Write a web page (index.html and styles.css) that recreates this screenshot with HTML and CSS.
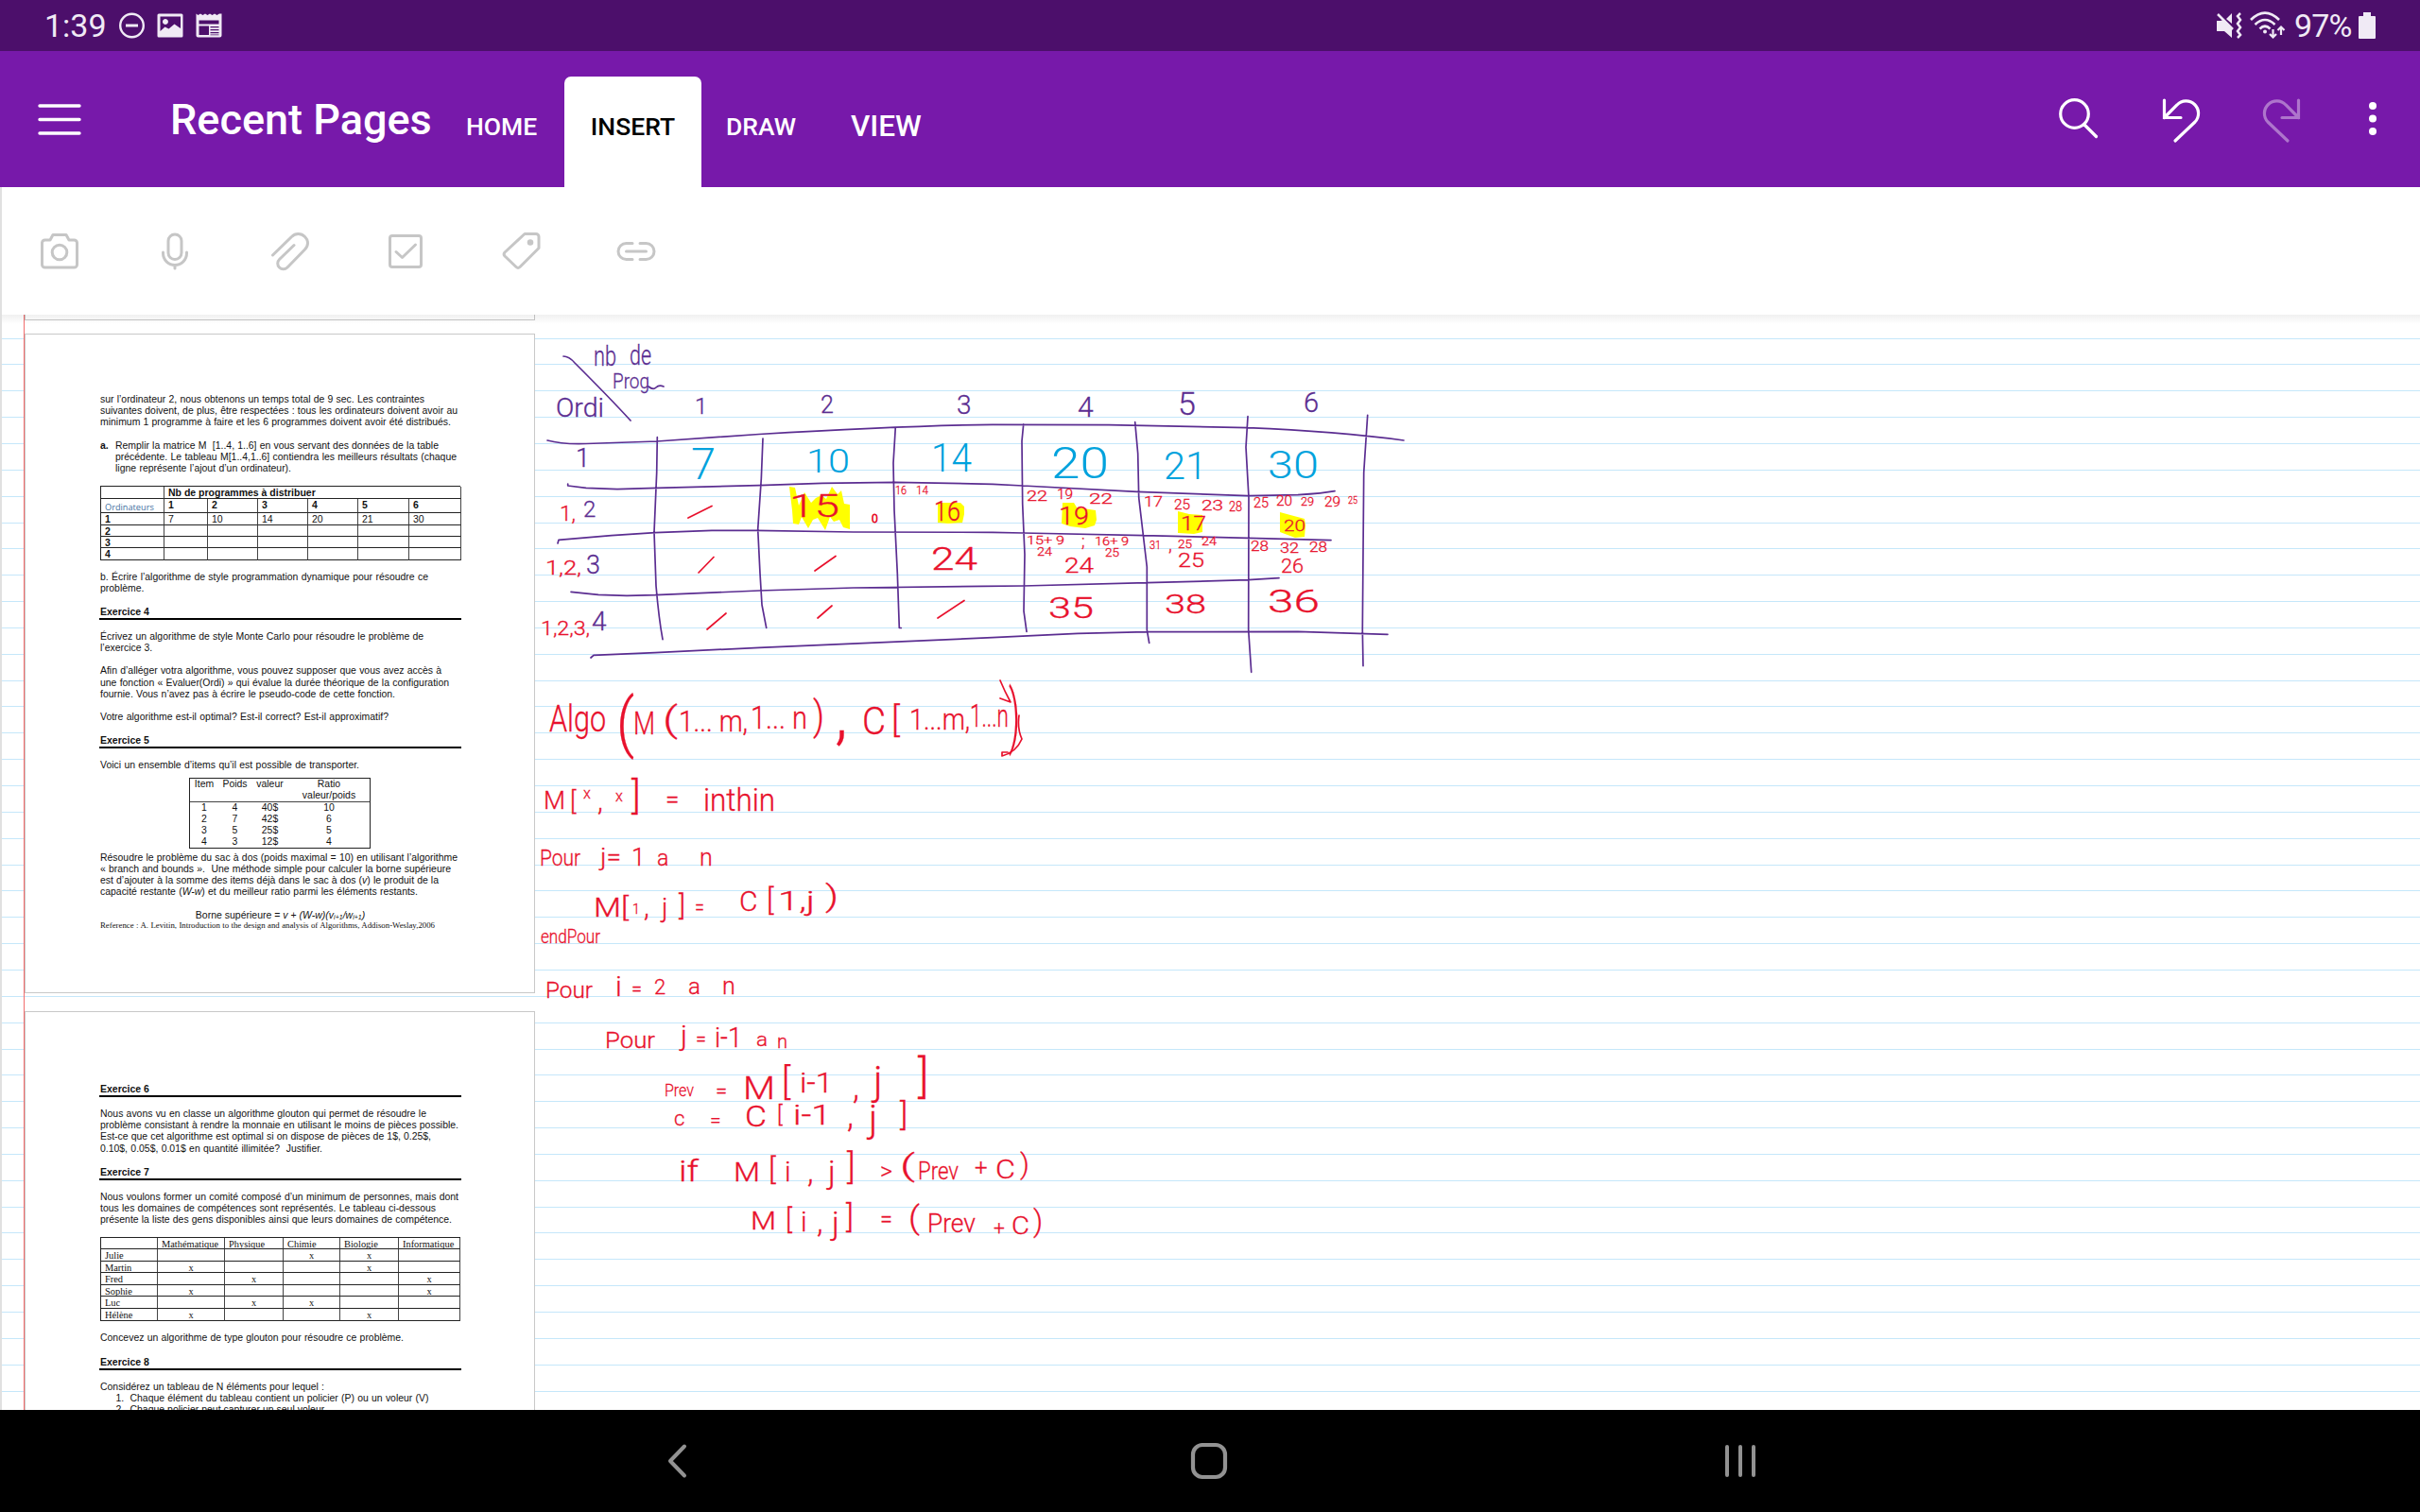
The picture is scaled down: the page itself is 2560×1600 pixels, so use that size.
FILE: index.html
```html
<!DOCTYPE html>
<html lang="fr">
<head>
<meta charset="utf-8">
<title>Recent Pages</title>
<link rel="stylesheet" href="styles.css">
</head>
<body>
<div class="screen">
  <div class="status">
    <div class="status-left">
      <span class="clock">1:39</span>
      <svg class="st-icon" viewBox="0 0 28 28"><circle cx="14.500" cy="14" r="12.300" fill="none" stroke="#f0eaf5" stroke-width="2.400"/><path d="M8 14h13" stroke="#f0eaf5" stroke-width="3"/></svg>
      <svg class="st-icon" viewBox="0 0 28 28"><path fill="#f0eaf5" fill-rule="evenodd" d="M2 1.500h24a1.500 1.500 0 0 1 1.500 1.500v22a1.500 1.500 0 0 1-1.500 1.500H2A1.500 1.500 0 0 1 .5 25V3A1.500 1.500 0 0 1 2 1.500zM3.500 4.500v15.500l5-4.500 4 2 6-5 5 3.500 1.500 1V4.500zM9 7a3 3 0 1 1-.1 0z"/></svg>
      <svg class="st-icon" viewBox="0 0 28 28"><path fill="#f0eaf5" fill-rule="evenodd" d="M.5 1.500l2 1.500 2.500-1.500L7.500 3l2.500-1.500L12.500 3 15 1.500 17.500 3 20 1.500 22.500 3 25 1.500l2.500 0v23a2 2 0 0 1-2 2h-23a2 2 0 0 1-2-2zM3.500 8.500v4h21v-4zM3.500 14.500v9.500h10.500v-9.500zM15.500 15v1.200h9V15zM15.500 18v1.200h9V18zM15.500 21v1.200h9V21zM15.500 23.500v.8h9v-.8z"/></svg>
    </div>
    <div class="status-right">
      <svg width="28" height="30" viewBox="0 0 28 30"><g fill="#f0eaf5"><path d="M1 10h4l3-1 9 9v10l-8-7H1zM11 8l6-6v11z"/></g><path d="M2 3l16 16" stroke="#f0eaf5" stroke-width="2.500"/><path d="M26 2l-3 3 3 4-3 4 3 4-3 4 3 4-3 3" fill="none" stroke="#f0eaf5" stroke-width="2.500"/></svg>
      <svg width="38" height="30" viewBox="0 0 38 30" fill="none" stroke="#f0eaf5" stroke-width="2.600"><path d="M1 9Q16-6 31 9M5.500 14Q16 4 26.500 14M10.500 18.500Q16 13 21.500 18.500"/><circle cx="16" cy="21.500" r="2" fill="#f0eaf5" stroke="none"/><path d="M24.500 19v8M21 24l3.500 3.500 3.500-3.500M33 25v-8M29.500 20l3.500-3.500 3.500 3.500" stroke-width="2.200"/></svg>
      <span class="pct">97%</span>
      <svg width="18" height="28" viewBox="0 0 18 28"><path fill="#f0eaf5" d="M5 0h8v4h4a1 1 0 0 1 1 1v22a1 1 0 0 1-1 1H1a1 1 0 0 1-1-1V5a1 1 0 0 1 1-1h4z"/></svg>
    </div>
  </div>

  <div class="header">
    <svg class="burger" width="46" height="32" viewBox="0 0 46 32" stroke="#fff" stroke-width="3.400" stroke-linecap="round"><path d="M2 1h42M2 15.500h42M2 30h42"/></svg>
    <div class="title">Recent Pages</div>
    <div class="tab home">HOME</div>
    <div class="tab insert">INSERT</div>
    <div class="tab draw">DRAW</div>
    <div class="tab view">VIEW</div>
    <div class="actions">
      <svg width="44" height="46" viewBox="0 0 44 46" fill="none" stroke="#fff" stroke-width="3.200" stroke-linecap="round"><circle cx="18.500" cy="18.500" r="14.800"/><path d="M29 30l12.500 12.500"/></svg>
      <svg width="44" height="50" viewBox="0 0 44 50" fill="none" stroke="#fff" stroke-width="3.200" stroke-linecap="round"><path d="M3.500 4v18.500h17.500M3.500 22.500L17 9a13 13 0 0 1 19 18L15 47"/></svg>
      <svg class="redo" width="44" height="50" viewBox="0 0 44 50" fill="none" stroke="#ae75cc" stroke-width="3.200" stroke-linecap="round"><path d="M40.500 4v18.500H23M40.500 22.500L27 9A13 13 0 0 0 8 27l21 20"/></svg>
      <svg width="10" height="38" viewBox="0 0 10 38" fill="#fff"><circle cx="5" cy="5" r="4"/><circle cx="5" cy="18.500" r="4"/><circle cx="5" cy="32" r="4"/></svg>
    </div>
  </div>

  <div class="toolbar">
    <svg class="tool" viewBox="0 0 44 44"><path d="M6.500 10H12l3-5.500h14L32 10h5.500a3 3 0 0 1 3 3v23a3 3 0 0 1-3 3h-31a3 3 0 0 1-3-3V13a3 3 0 0 1 3-3z"/><circle cx="22" cy="23" r="7.800"/></svg>
    <svg class="tool" viewBox="0 0 44 44"><rect x="15" y="4" width="14" height="26.500" rx="7"/><path d="M9.500 23v1a12.500 12.500 0 0 0 25 0V23M22 37v3"/></svg>
    <svg class="tool" viewBox="0 0 44 44"><path d="M3.500 26L23.500 6.500a9.700 9.700 0 0 1 14 0c4 4 4 9.500 0 13.500L19 39a6 6 0 0 1-8.500-8.500L26 15.500"/></svg>
    <svg class="tool" viewBox="0 0 44 44"><rect x="5.500" y="5.500" width="33" height="33" rx="2.500"/><path d="M12 22.500l6.500 6 14-13.500"/></svg>
    <svg class="tool" viewBox="0 0 44 44"><path d="M26 3.500h12a3 3 0 0 1 3 3v12L21 38.500a3 3 0 0 1-4 0L5 27a3 3 0 0 1 0-4z"/><circle cx="32" cy="12.500" r="1.800" fill="#c6c6c6"/></svg>
    <svg class="tool" viewBox="0 0 44 44"><path d="M18 13.500h-6.500a8.500 8.500 0 0 0 0 17H18M26 13.500h6.500a8.500 8.500 0 0 1 0 17H26M11.500 22h21"/></svg>
  </div>

  <div class="canvas">
    <svg class="rules" viewBox="0 333 2560 1160" width="2560" height="1160" shape-rendering="crispEdges">
      <path fill="none" stroke="#c5e7fa" d="M2 358.5H2560M2 385.5H2560M2 413.5H2560M2 441.5H2560M2 469.5H2560M2 497.5H2560M2 525.5H2560M2 553.5H2560M2 580.5H2560M2 608.5H2560M2 636.5H2560M2 664.5H2560M2 692.5H2560M2 720.5H2560M2 747.5H2560M2 775.5H2560M2 803.5H2560M2 831.5H2560M2 859.5H2560M2 887.5H2560M2 915.5H2560M2 942.5H2560M2 970.5H2560M2 998.5H2560M2 1026.5H2560M2 1054.5H2560M2 1082.5H2560M2 1110.5H2560M2 1137.5H2560M2 1165.5H2560M2 1193.5H2560M2 1221.5H2560M2 1249.5H2560M2 1277.5H2560M2 1304.5H2560M2 1332.5H2560M2 1360.5H2560M2 1388.5H2560M2 1416.5H2560M2 1444.5H2560M2 1472.5H2560"/>
    </svg>

    <div class="printouts">
      <div class="sheet sheet-prev"></div>
      <div class="sheet sheet-one">
        <p><span class="ln" style="width:343px">sur l’ordinateur 2, nous obtenons un temps total de 9 sec. Les contraintes</span><span class="ln" style="width:378px">suivantes doivent, de plus, être respectées : tous les ordinateurs doivent avoir au</span><span class="ln" style="width:371px">minimum 1 programme à faire et les 6 programmes doivent avoir été distribués.</span></p>
        <div class="item"><b>a.</b><p><span class="ln" style="width:342px">Remplir la matrice M &nbsp;[1..4, 1..6] en vous servant des données de la table</span><span class="ln" style="width:361px">précédente. Le tableau M[1..4,1..6] contiendra les meilleurs résultats (chaque</span><span class="ln" style="width:186px">ligne représente l’ajout d’un ordinateur).</span></p></div>
        <div class="grid4">
          <span></span><b class="span6">Nb de programmes à distribuer</b>
          <span class="ordi">Ordinateurs</span><b>1</b><b>2</b><b>3</b><b>4</b><b>5</b><b>6</b>
          <b>1</b><span>7</span><span>10</span><span>14</span><span>20</span><span>21</span><span>30</span>
          <b>2</b><span></span><span></span><span></span><span></span><span></span><span></span>
          <b>3</b><span></span><span></span><span></span><span></span><span></span><span></span>
          <b>4</b><span></span><span></span><span></span><span></span><span></span><span></span>
        </div>
        <p><span class="ln" style="width:347px">b. Écrire l’algorithme de style programmation dynamique pour résoudre ce</span><span class="ln" style="width:46px">problème.</span></p>
        <h2>Exercice 4</h2>
        <p><span class="ln" style="width:342px">Écrivez un algorithme de style Monte Carlo pour résoudre le problème de</span><span class="ln" style="width:55px">l’exercice 3.</span></p>
        <p><span class="ln" style="width:361px">Afin d’alléger votra algorithme, vous pouvez supposer que vous avez accès à</span><span class="ln" style="width:369px">une fonction « Evaluer(Ordi) » qui évalue la durée théorique de la configuration</span><span class="ln" style="width:312px">fournie. Vous n’avez pas à écrire le pseudo-code de cette fonction.</span></p>
        <p><span class="ln" style="width:305px">Votre algorithme est-il optimal? Est-il correct? Est-il approximatif?</span></p>
        <h2>Exercice 5</h2>
        <p><span class="ln" style="width:274px">Voici un ensemble d’items qu’il est possible de transporter.</span></p>
        <div class="sack">
          <div class="sack-row head"><span>Item</span><span>Poids</span><span>valeur</span><span>Ratio<br>valeur/poids</span></div>
          <div class="sack-row"><span>1</span><span>4</span><span>40$</span><span>10</span></div>
          <div class="sack-row"><span>2</span><span>7</span><span>42$</span><span>6</span></div>
          <div class="sack-row"><span>3</span><span>5</span><span>25$</span><span>5</span></div>
          <div class="sack-row"><span>4</span><span>3</span><span>12$</span><span>4</span></div>
        </div>
        <p class="tight"><span class="ln" style="width:378px">Résoudre le problème du sac à dos (poids maximal = 10) en utilisant l’algorithme</span><span class="ln" style="width:371px">« branch and bounds ». &nbsp;Une méthode simple pour calculer la borne supérieure</span><span class="ln" style="width:358px">est d’ajouter à la somme des items déjà dans le sac à dos (<i>v</i>) le produit de la</span><span class="ln" style="width:336px">capacité restante (<i>W-w</i>) et du meilleur ratio parmi les éléments restants.</span></p>
        <p class="formula">Borne supérieure = <i>v</i> + <i>(W-w)(v<small>i+1</small>/w<small>i+1</small>)</i></p>
        <p class="cite"><span class="ln" style="width:354px">Reference : A. Levitin, Introduction to the design and analysis of Algorithms, Addison-Weslay,2006</span></p>
      </div>
      <div class="sheet sheet-two">
        <h2>Exercice 6</h2>
        <p><span class="ln" style="width:345px">Nous avons vu en classe un algorithme glouton qui permet de résoudre le</span><span class="ln" style="width:379px">problème consistant à rendre la monnaie en utilisant le moins de pièces possible.</span><span class="ln" style="width:350px">Est-ce que cet algorithme est optimal si on dispose de pièces de 1$, 0.25$,</span><span class="ln" style="width:235px">0.10$, 0.05$, 0.01$ en quantité illimitée? &nbsp;Justifier.</span></p>
        <h2>Exercice 7</h2>
        <p><span class="ln" style="width:379px">Nous voulons former un comité composé d’un minimum de personnes, mais dont</span><span class="ln" style="width:355px">tous les domaines de compétences sont représentés. Le tableau ci-dessous</span><span class="ln" style="width:372px">présente la liste des gens disponibles ainsi que leurs domaines de compétence.</span></p>
        <div class="people">
          <span></span><span class="l">Mathématique</span><span class="l">Physique</span><span class="l">Chimie</span><span class="l">Biologie</span><span class="l">Informatique</span>
          <span class="l">Julie</span><span></span><span></span><span>x</span><span>x</span><span></span>
          <span class="l">Martin</span><span>x</span><span></span><span></span><span>x</span><span></span>
          <span class="l">Fred</span><span></span><span>x</span><span></span><span></span><span>x</span>
          <span class="l">Sophie</span><span>x</span><span></span><span></span><span></span><span>x</span>
          <span class="l">Luc</span><span></span><span>x</span><span>x</span><span></span><span></span>
          <span class="l">Hélène</span><span>x</span><span></span><span></span><span>x</span><span></span>
        </div>
        <p><span class="ln" style="width:321px">Concevez un algorithme de type glouton pour résoudre ce problème.</span></p>
        <h2>Exercice 8</h2>
        <p><span class="ln" style="width:237px">Considérez un tableau de N éléments pour lequel :</span></p>
        <div class="item list"><span>1.</span><span class="ln" style="width:316px">Chaque élément du tableau contient un policier (P) ou un voleur (V)</span></div>
        <div class="item list"><span>2.</span><span class="ln" style="width:208px">Chaque policier peut capturer un seul voleur.</span></div>
      </div>
    </div>

    <svg class="ink" viewBox="0 333 2560 1160" width="2560" height="1160">
      <path class="hl" d="M835 515l6 1 4 19 6-14 7 11 5-5 6-3 5 4 6-13 6 8 4-4 3 14 6 1v26l-7-2-4-8-6 2-4-5-5 14-8-13-5 2-5 9-7-12-3 8-6-1-1-14z"/>
      <path class="hl" d="M992 532h24l4 4v8l-2 9-15 1-11-1z"/>
      <path class="hl" d="M1124 532h12l3 5 20 3 1 10-2 6-10 3-16-2-9-3z"/>
      <path class="hl" d="M1246 541l12 3 14 1v18l-9 2-17-1z"/>
      <path class="hl" d="M1354 542l11 3 15 4 1 7-1 12-10 1-16-6z"/>
      <path class="violet" d="M596 377q6 0 12 7Q645 421 667 445M686 409q5 4 8 1t8-1M579 466C590 469 605 470 620 469.500L695 467 803 459.500C880 455 960 450.500 1050 449.300L1173 449.700 1320 452.700C1400 456 1440 460 1485 466M600.700 512v2L620 516.300 653 517.600 695 516.300 803 513.700 870 511.300 947 510.300 1050 512.300 1082 514 1203 520.300 1320 524.700 1373 523.700Q1400 522 1412 519.700M590 575L591 571.300 647 566.700 693 563.700 753 561.300 800 561.300 903 563 1050 563.300 1082 564 1210 566.700 1320 569.300 1408 571.700M604 626.300L633 629.300 663 630.300 693 629.700 803 625 903 622 1040 620.300 1082 620 1213 616.700 1320 613.700 1353 611.700M625 696L628 693.300 693 690.700 803 685.300 1050 674.700 1140 670.300 1213 668.700 1373 668.300 1468 671.300M695.300 462.700L694.700 500 692 563 694 620Q697 655 701 676.700M807 464L805.300 506.700 801.700 560 804 606.700 806 640 810.700 664.300M947.300 452L945 490 946 540 949.300 606.700 951.300 664.500h2M1082.700 449L1081 466.700 1081.700 533.300 1084 586.700 1083 646.700 1086 668.300M1200.700 446.700L1203.700 480 1204.700 526.700 1213.300 600 1213.300 666.700 1215.700 680.300M1320 440.700L1318 473.300 1321 526.700 1320.700 666.700 1323.700 711.300M1446.700 439.300L1442.700 500 1441.300 666.700 1442 704.700"/>
      <path class="red" d="M728 548L753 535.500M739 606L755 589.500M862 604L884 588.500M748 666L768 649M865 654L880 641M992 654L1020 635.500"/>

      <g class="t violet-t">
        <text x="628" y="387" font-size="29" textLength="24">nb</text><text x="666" y="386" font-size="30" textLength="23">de</text><text x="648" y="411" font-size="22" textLength="39">Prog</text><text x="588" y="441" font-size="27" textLength="51">Ordi</text>
        <text x="735" y="438" font-size="24">1</text><text x="868" y="437" font-size="25">2</text><text x="1012" y="438" font-size="28">3</text><text x="1140" y="441" font-size="30">4</text><text x="1246" y="439" font-size="34">5</text><text x="1379" y="436" font-size="29">6</text>
        <text x="609" y="494" font-size="27">1</text><text x="617" y="547" font-size="24">2</text><text x="620" y="607" font-size="27">3</text><text x="626" y="667" font-size="28">4</text>
      </g>
      <g class="t blue-t">
        <text x="731" y="507" font-size="47">7</text><text x="853" y="500" font-size="35" textLength="46">10</text><text x="985" y="499" font-size="42" textLength="43">14</text><text x="1112" y="506" font-size="46" textLength="61">20</text><text x="1231" y="507" font-size="40" textLength="46">21</text><text x="1341" y="506" font-size="41" textLength="54">30</text>
      </g>
      <g class="t red-t">
        <text x="592" y="551" font-size="22" textLength="17">1,</text><text x="835" y="547" font-size="34" textLength="53">15</text><text x="922" y="553" font-size="12" stroke-width=".8">0</text><text x="947" y="523" font-size="13" textLength="12">16</text><text x="969" y="523" font-size="13" textLength="13">14</text><text x="988" y="551" font-size="29" textLength="28">16</text>
        <text x="1086" y="530" font-size="14" textLength="22">22</text><text x="1118" y="528" font-size="14" textLength="17">19</text><text x="1152" y="533" font-size="15" textLength="25">22</text><text x="1120" y="555" font-size="25" textLength="32">19</text>
        <text x="1210" y="536" font-size="15" textLength="20">17</text><text x="1242" y="539" font-size="15" textLength="17">25</text><text x="1271" y="540" font-size="15" textLength="23">23</text><text x="1300" y="541" font-size="15" textLength="14">28</text><text x="1249" y="561" font-size="21" textLength="27">17</text>
        <text x="1326" y="537" font-size="14" textLength="16">25</text><text x="1350" y="535" font-size="14" textLength="17">20</text><text x="1376" y="535" font-size="13" textLength="14">29</text><text x="1401" y="536" font-size="14" textLength="17">29</text><text x="1426" y="533" font-size="11" textLength="10">25</text><text x="1358" y="562" font-size="17" textLength="23">20</text>
        <text x="577" y="608" font-size="20" textLength="38">1,2,</text><text x="985" y="603" font-size="34" textLength="49">24</text>
        <text x="1086" y="576" font-size="12" textLength="40">15+ 9</text><text x="1144" y="579" font-size="18">;</text><text x="1158" y="577" font-size="12" textLength="36">16+ 9</text><text x="1097" y="588" font-size="13" textLength="16">24</text><text x="1169" y="589" font-size="12" textLength="15">25</text><text x="1126" y="606" font-size="22" textLength="31">24</text>
        <text x="1216" y="581" font-size="13" textLength="12">31</text><text x="1236" y="583" font-size="20">,</text><text x="1246" y="580" font-size="12" textLength="15">25</text><text x="1271" y="577" font-size="12" textLength="16">24</text><text x="1246" y="600" font-size="21" textLength="28">25</text>
        <text x="1323" y="583" font-size="15" textLength="19">28</text><text x="1354" y="585" font-size="14" textLength="20">32</text><text x="1385" y="584" font-size="14" textLength="19">28</text><text x="1355" y="606" font-size="21" textLength="24">26</text>
        <text x="572" y="672" font-size="20" textLength="52">1,2,3,</text><text x="1109" y="654" font-size="31" textLength="48">35</text><text x="1232" y="649" font-size="27" textLength="44">38</text><text x="1341" y="648" font-size="34" textLength="55">36</text>

        <text x="581" y="774" font-size="38" textLength="60">Algo</text><text x="652" y="788" font-size="68" textLength="19">(</text><text x="670" y="777" font-size="33" textLength="23">M</text><text x="701" y="774" font-size="36" textLength="16">(</text><text x="718" y="774" font-size="31" textLength="73">1... m,</text><text x="794" y="771" font-size="33" textLength="60">1... n</text><text x="860" y="772" font-size="42" textLength="12">)</text><text x="883" y="780" font-size="72">,</text>
        <text x="912" y="777" font-size="40" textLength="25">C</text><text x="943" y="774" font-size="37">[</text><text x="962" y="772" font-size="31" textLength="64">1...m,</text><text x="1026" y="769" font-size="34" textLength="41">1...n</text><text x="1067" y="783" font-size="74" textLength="12">)</text>
        <text x="575" y="856" font-size="26" textLength="23">M</text><text x="603" y="857" font-size="27">[</text><text x="617" y="845" font-size="16">x</text><text x="632" y="858" font-size="30">,</text><text x="651" y="848" font-size="16">x</text><text x="668" y="856" font-size="40">]</text><text x="704" y="855" font-size="26">=</text><text x="744" y="858" font-size="33" textLength="76">inthin</text>
        <text x="571" y="916" font-size="23" textLength="43">Pour</text><text x="635" y="916" font-size="26" textLength="22">j=</text><text x="668" y="916" font-size="26">1</text><text x="695" y="916" font-size="23">a</text><text x="740" y="916" font-size="25">n</text>
        <text x="628" y="970" font-size="28" textLength="37">M[</text><text x="669" y="967" font-size="14">1</text><text x="681" y="970" font-size="30">,</text><text x="700" y="970" font-size="28">j</text><text x="718" y="968" font-size="29">]</text><text x="735" y="968" font-size="24" textLength="10">=</text><text x="782" y="964" font-size="30">C</text><text x="811" y="963" font-size="31">[</text><text x="823" y="963" font-size="28" textLength="39">1,j</text><text x="873" y="959" font-size="32" textLength="14">)</text>
        <text x="572" y="998" font-size="20" textLength="63">endPour</text>
        <text x="577" y="1056" font-size="23" textLength="50">Pour</text><text x="651" y="1054" font-size="30">i</text><text x="668" y="1054" font-size="22" textLength="11">=</text><text x="692" y="1052" font-size="22">2</text><text x="728" y="1052" font-size="24">a</text><text x="764" y="1052" font-size="25">n</text>
        <text x="640" y="1109" font-size="23" textLength="53">Pour</text><text x="720" y="1106" font-size="30">j</text><text x="736" y="1107" font-size="22" textLength="11">=</text><text x="756" y="1108" font-size="29" textLength="29">i-1</text><text x="800" y="1107" font-size="20" textLength="12">a</text><text x="822" y="1109" font-size="20">n</text>
        <text x="703" y="1160" font-size="19" textLength="31">Prev</text><text x="757" y="1162" font-size="22">=</text><text x="786" y="1163" font-size="34" textLength="34">M</text><text x="827" y="1158" font-size="38">[</text><text x="846" y="1156" font-size="30" textLength="35">i-1</text><text x="902" y="1162" font-size="36">,</text><text x="924" y="1158" font-size="42">j</text><text x="971" y="1156" font-size="48">]</text>
        <text x="713" y="1191" font-size="22">c</text><text x="751" y="1192" font-size="21">=</text><text x="788" y="1192" font-size="31" textLength="23">C</text><text x="822" y="1188" font-size="24">[</text><text x="839" y="1190" font-size="30" textLength="40">i-1</text><text x="896" y="1192" font-size="36">,</text><text x="919" y="1198" font-size="40">j</text><text x="952" y="1191" font-size="34">]</text>
        <text x="718" y="1250" font-size="31" textLength="21">if</text><text x="776" y="1250" font-size="27" textLength="28">M</text><text x="813" y="1248" font-size="32">[</text><text x="830" y="1250" font-size="29">i</text><text x="854" y="1251" font-size="34">,</text><text x="876" y="1252" font-size="34">j</text><text x="896" y="1247" font-size="36">]</text><text x="931" y="1248" font-size="26" textLength="13">&gt;</text><text x="952" y="1244" font-size="32" textLength="16">(</text><text x="971" y="1248" font-size="26" textLength="43">Prev</text><text x="1031" y="1244" font-size="24">+</text><text x="1053" y="1247" font-size="27" textLength="21">C</text><text x="1079" y="1242" font-size="30">)</text>
        <text x="794" y="1301" font-size="25" textLength="27">M</text><text x="831" y="1300" font-size="29">[</text><text x="847" y="1303" font-size="29">i</text><text x="864" y="1304" font-size="34">,</text><text x="880" y="1306" font-size="34">j</text><text x="895" y="1299" font-size="33">]</text><text x="931" y="1299" font-size="26" textLength="13">=</text><text x="961" y="1300" font-size="33" textLength="12">(</text><text x="981" y="1304" font-size="27" textLength="51">Prev</text><text x="1051" y="1306" font-size="21">+</text><text x="1070" y="1306" font-size="25" textLength="19">C</text><text x="1093" y="1303" font-size="31">)</text>
      </g>
      <path class="red" d="M1058 720q5 12 11 23l-11-4M1078 757q-2 14 3 25-6 14-21 18v-4h6"/>
    </svg>
    <div class="margin-line"></div>
    <div class="shade"></div>
  </div>

  <div class="nav">
    <svg width="22" height="38" viewBox="0 0 22 38" fill="none" stroke="#929292" stroke-width="4" stroke-linecap="round" stroke-linejoin="round"><path d="M19 3.500L4 19l15 15.500"/></svg>
    <svg width="40" height="40" viewBox="0 0 40 40"><rect x="3" y="3" width="34" height="34" rx="10" fill="none" stroke="#929292" stroke-width="4.200"/></svg>
    <svg width="34" height="38" viewBox="0 0 34 38" stroke="#929292" stroke-width="4" stroke-linecap="round"><path d="M3 4v30M17 4v30M31 4v30"/></svg>
  </div>
</div>
<script src="ink.js"></script>
</body>
</html>
```
FILE: ink.js
```js
// Stretch the glyphs, not only the gaps, to each word's measured length.
document.querySelectorAll('.ink text[textLength]').forEach(function (t) {
  t.setAttribute('lengthAdjust', 'spacingAndGlyphs');
});
```
FILE: styles.css
```css
* { box-sizing: border-box; }
body { margin: 0; background: #000; font-family: Roboto, sans-serif; }
.screen { width: 2560px; height: 1600px; display: flex; flex-direction: column; overflow: hidden; }

.status { height: 54px; background: #4c0f6b; color: #f0eaf5; display: flex; justify-content: space-between; padding: 0 47px 0 47px; font-size: 34px; line-height: 56px; }
.status-left, .status-right { display: flex; align-items: center; }
.status-left { gap: 13px; }
.st-icon { width: 28px; height: 28px; }
.clock { width: 65px; }
.status-right { gap: 9px; }
.status-right svg:first-child { margin-right: -1px; }
.pct { width: 64px; letter-spacing: -.8px; }
.status-right svg:last-child { margin-left: -5px; }

.header { height: 144px; background: #7719aa; color: #fff; display: flex; font-weight: 500; }
.burger { margin: 57px 0 0 40px; overflow: visible; }
.title { width: 276px; margin-left: 94px; font-size: 45px; line-height: 53px; padding-top: 46px; white-space: nowrap; }
.tab { font-size: 26.5px; line-height: 32px; padding-top: 64px; white-space: nowrap; }
.home { width: 104px; margin-left: 37px; }
.insert { width: 145px; height: 117px; margin-top: 27px; padding-top: 37px; text-align: center; background: #fff; color: #000; border-radius: 7px 7px 0 0; }
.draw { margin-left: 26px; width: 132px; }
.view { font-size: 31.5px; }
.actions { flex: 1; display: flex; justify-content: flex-end; padding: 48px 45px 0 0; }
.actions svg:nth-child(1) { margin-right: 66px; }
.actions svg:nth-child(2) { margin-right: 61px; }
.actions svg:nth-child(3) { margin-right: 70px; }
.actions svg:nth-child(4) { margin-top: 5px; }

.toolbar { height: 135px; background: #fff; border-left: 2px solid #e0e0e0; display: flex; align-items: center; gap: 78px; padding-left: 39px; }
.tool { width: 44px; height: 44px; fill: none; stroke: #c6c6c6; stroke-width: 3; stroke-linecap: round; stroke-linejoin: round; }

.canvas { height: 1159px; background: #fff; position: relative; overflow: hidden; border-left: 2px solid #e0e0e0; }
.rules, .ink { position: absolute; left: -2px; top: 0; }
.margin-line { position: absolute; left: 23px; top: 0; width: 1px; height: 100%; background: #f26d6d; }
.shade { position: absolute; left: 0; top: 0; width: 100%; height: 10px; background: linear-gradient(rgba(0,0,0,.06), rgba(0,0,0,0)); }

.printouts { position: relative; width: 540px; margin-left: 24px; font: 10.45px/12.2px "Liberation Sans", sans-serif; color: #111; }
.sheet { background: #fff; border: 1px solid #c8c8c8; padding-left: 79px; }
.sheet-prev { height: 6px; border-top: 0; }
.sheet-one { height: 698px; margin-top: 14px; padding-top: 63px; }
.sheet-two { height: 600px; margin-top: 19px; padding-top: 75px; }
.sheet p { margin: 12px 0 0; }
.sheet > p:first-child { margin-top: 0; }
.ln { display: block; white-space: nowrap; text-align: justify; text-align-last: justify; }
.item { display: flex; margin-top: 12.4px; }
.item b { width: 16px; }
.item p { margin: 0; }
.list { margin: 0 0 0 16.5px; }
.list > span:first-child { width: 15px; }
.sheet h2 { width: 383px; margin: 12px 0 0 -1px; padding: 0 1px; height: 15px; font-size: 10.5px; line-height: 12px; font-weight: bold; border-bottom: 2.5px solid #000; }
.sheet > h2:first-child { margin-top: 0; }

.grid4 { display: grid; width: 381px; margin-top: 11px; grid-template-columns: 67px 46px 53px 53px 53px 54px 55px; grid-template-rows: 13px 15px 13px 12px 12px 13px; border-left: 1px solid #222; border-top: 1px solid #222; font-size: 10.5px; }
.grid4 > * { border-right: 1px solid #444; border-bottom: 1px solid #222; padding-left: 4px; line-height: 13px; }
.span6 { grid-column: span 6; }
.grid4 .ordi { color: #44719f; font: 9.2px/17px "Open Sans", sans-serif; }

.sack { width: 192px; height: 75px; margin: 6.4px 0 0 94px; border: 1px solid #222; }
.sack-row { display: grid; grid-template-columns: 30px 35px 39px 1fr; text-align: center; height: 12.2px; }
.sack-row.head { height: 25px; border-bottom: 1px solid #444; }
.sheet .tight { margin-top: 4px; }
.sheet .formula { width: 381px; text-align: center; font-size: 10.5px; margin-top: 11px; }
.formula small { font-size: 7px; vertical-align: -1px; line-height: 1px; }
.sheet .cite { margin: 0; font: 8.8px/11.5px "Liberation Serif", serif; }

.people { display: grid; width: 381px; margin-top: 12px; grid-template-columns: 60px 71px 62px 60px 62px 65px; grid-template-rows: 12px 13px 12px 13px 12px 13px 13px; border-left: 1px solid #222; border-top: 1px solid #222; font: 10.4px/13px "Liberation Serif", serif; text-align: center; }
.people > * { border-right: 1px solid #444; border-bottom: 1px solid #222; }
.people .l { text-align: left; padding-left: 4px; }

.hl { fill: #ff0; }
.violet, .red { fill: none; stroke-width: 1.7; stroke-linecap: round; stroke-linejoin: round; }
.violet { stroke: #5b2d91; }
.red { stroke: #e8112d; }
.t { font-family: Roboto, sans-serif; font-weight: 300; stroke-width: .3; }
.violet-t { fill: #5b2d91; stroke: #5b2d91; }
.blue-t { fill: #00a2dd; }
.red-t { fill: #e8112d; stroke: #e8112d; }

.nav { height: 108px; background: #000; display: flex; align-items: center; padding-left: 705px; }
.nav svg:nth-child(2) { margin-left: 532px; }
.nav svg:nth-child(3) { margin-left: 525px; }
```
